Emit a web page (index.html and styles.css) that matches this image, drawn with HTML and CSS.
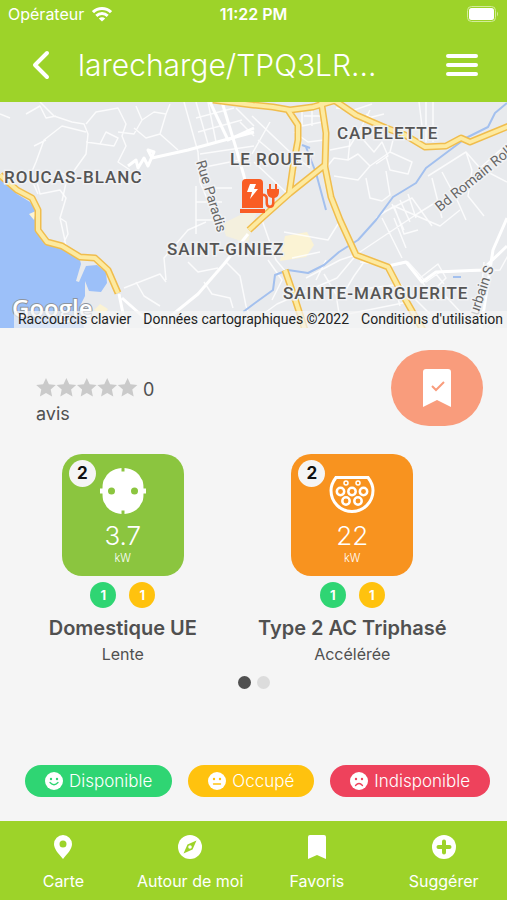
FILE: index.html
```html
<!DOCTYPE html>
<html lang="fr">
<head>
    <meta charset="UTF-8">
    <meta name="viewport" content="width=device-width, initial-scale=1.0">
    <title>larecharge</title>
    <link rel="stylesheet" href="styles.css">
</head>
<body>
    <header class="header">
        <div class="status-bar">
            <div class="status-left">
                <span>Opérateur</span>
                <svg width="20" height="15" viewBox="0 0 20 15" fill="none" stroke="#fff" stroke-width="3">
                    <path d="M1 5.2C6 .4 14 .4 19 5.2M4.3 8.8c3.3-3 8.1-3 11.4 0"/>
                    <path d="M10 14.5L6.8 11.4c1.8-1.7 4.6-1.7 6.4 0z" fill="#fff" stroke="none"/>
                </svg>
            </div>
            <span class="status-time">11:22 PM</span>
            <div class="status-right">
                <svg width="32" height="16" viewBox="0 0 32 16">
                    <rect x=".5" y=".5" width="28" height="15" rx="4" fill="none" stroke="#d3ec9b"/>
                    <rect x="2" y="2" width="25" height="12" rx="2.5" fill="#fff"/>
                    <path d="M30 5.500q2 2.500 0 5z" fill="#d3ec9b"/>
                </svg>
            </div>
        </div>
        <div class="nav-bar">
            <button class="icon-btn" aria-label="Retour">
                <svg width="18" height="30" viewBox="0 0 18 30" fill="none" stroke="#fff" stroke-width="4" stroke-linecap="round" stroke-linejoin="round">
                    <path d="M15 3L3 15l12 12"/>
                </svg>
            </button>
            <h1>larecharge/TPQ3LR...</h1>
            <button class="icon-btn" aria-label="Menu">
                <svg width="34" height="24" viewBox="0 0 34 24" stroke="#fff" stroke-width="4" stroke-linecap="round">
                    <path d="M3 3h28M3 12h28M3 21h28"/>
                </svg>
            </button>
        </div>
    </header>

    <section class="map">
        <svg class="map-canvas" viewBox="0 0 507 226" preserveAspectRatio="xMidYMid slice">
            <rect width="507" height="226" fill="#e8eaed"/>
            <!-- sea -->
            <path class="sea" d="M0 76L8 84 17 92 30 100 36 108 35 128 45 141 62 147 80 158 81 162 76 179 79 180 86 164 97 163 106 170 107 181 101 190 89 189 85 179 85 194 80 204 84 226H0z"/>
            <path class="sand" d="M36 109l-7 3 5 6zM94 208l6-6 8 5-5 7z"/>
            <path class="park" d="M285 134l22-4 7 13-8 12-26 4z"/>
            <path class="built" d="M222 122l24-12 12-2-6 14-6 32-8-16-12-4z"/>
            <!-- small streets -->
            <path class="street" d="M0 12l10 4M26 12l14-8 6 12 10-2M40 0l14 14 18 6 12 2 4 10-2 20-10 14-10 15-4 18M86 30l-24-6-18 14-8 22-6 14 8 18M46 38l-12 6M86 22l10-12 22-4 8 16-4 12 4 10-8 16 12 8M86 40l14 2 6-12 12 6-4 8-14-2M118 30l16 2 8-14 12-8 12 2M134 26l12 10 14-4 6-20 4-10M142 18l-6-14M160 32l18 16"/>
            <path class="street" d="M64 82l-4-12 10 6M36 76l4 16 20-4 6 8-6 20 4 18 2 10M64 140l4-8-2-12-6-4"/>
            <path class="road" d="M128 64l8-6 2 8 6-10 4 8 6-14-6-2 4 8 36-8 66-18"/>
            <path class="street" d="M184 0l14 50 2 30 20 48M196 0l12 42M208 0l8 40M196 16l38-10M198 30l44-12M200 52l54-8M200 66l40-8M196 100h26M202 86h30M196 118h24M240 20l14 14M236 6l18 18M196 84v48"/>
            <path class="road" d="M222 0l14 46 8 28 6 30M210 0l18 38 26-12"/>
            <path class="street" d="M252 14l40 38 18 14M258 38l38 32M254 60l36 34M270 20l-18 32M302 6v18l20-4M304 14h18M312 4v20M294 30l14 10 16-2M330 48l20-4 12-20 8-16M366 12l22 16M426 0v40M433 0v40M422 24l-3-24M336 6l18 2 18-6M360 18l24-6"/>
            <path class="street" d="M326 66l8-10 14 2 10-6 12 12-12 14-24-4M348 58l2-20 10-4 14 16 8-10 6 14-12 8M370 64l20-14 4-16M390 50l22 10-4 12-18-4-4-14M366 76l4 20 12 3 8-6-4-24"/>
            <path class="street" d="M428 74l38-24 14 16 27 14M432 76l10 40M442 70l16 30 8 18M466 50l6 18-4 26 16 20M480 66l27-24M384 110l28-14 20 28M392 102l12 26M400 98l10 22M408 92l8 24M376 116l18-12 46 20 20-16M394 104l10 28 14-4"/>
            <path class="road" d="M122 196l34 30M119 192l7 34M156 226l42-34 26-30 24-30"/>
            <path class="street" d="M124 186l36-14 6 8M166 178l-2-22 24-28 18-8M136 180l8 14 16 10M188 160l10 10 20-4M204 180l8 12 18 4 3 10M226 160l14 14 6 30 8 22"/>
            <path class="street" d="M262 118l14 40 10 12M284 130l44 8 10-16M292 156l28-6M255 218l22-16 60-26 20-24 60-40 16-10M306 176l34-18 18-6 6 8-10 14-12 20M324 172l12 20 4 26M326 158l-10 20M268 158l14 20-10 20M360 160l30 4 18-4 18 20 14-10 60-2 22-40M382 116l20 40M394 116l12 30M390 166l10 38M420 176l18-14 8 14-16 16zM436 172l8 10M438 186l28 30M484 160l-6 66M356 188l44-6 30 30M338 214l70-14"/>
            <path class="road" d="M388 164l18-4 16 20 14-10 46-2 25-24M507 116l-14 32-12 78"/>
            <!-- water -->
            <path class="river" d="M507 1l-12 10-7 14-22 11-40 30-10 15-23 14-17 23-18 20-19 12-15 13-16 8-20-3-13 5-2 15-18 13-12 9M306 45l10 26 10 37M302 43l8 3M453 175h8"/>
            <!-- main roads -->
            <defs>
                <path id="main-roads" d="M0 73L8 80 17 88 32 96 38 108 38 128 47 140 62 144 80 155 95 156 108 168 118 191M213-2L253 3 273 5 290 8 313 5 340-3M288 8L298 23 298 38 293 65 289 93M321-2L326 31 325 65 331 95 340 118 356 153 388 165 400 188 416 216 423 228M325 63L290 91 263 115 249 128M334-2L356 13 386 26 405 33 425 45 446 44 461 36 470 40 509 24M285 168L296 200 305 228"/>
            </defs>
            <use class="main-edge" href="#main-roads"/>
            <use class="main-road" href="#main-roads"/>
            <g class="district">
                <text x="4" y="81">ROUCAS-BLANC</text>
                <text x="230" y="63">LE ROUET</text>
                <text x="337" y="37">CAPELETTE</text>
                <text x="167" y="153">SAINT-GINIEZ</text>
                <text x="283" y="197">SAINTE-MARGUERITE</text>
            </g>
            <g class="street-name">
                <text transform="translate(196 60) rotate(73)">Rue Paradis</text>
                <text transform="translate(440 110) rotate(-39)">Bd Romain Rolland</text>
                <text transform="translate(478 214) rotate(-72)">urbain S</text>
            </g>
            <text class="google" x="12" y="215">Google</text>
            <!-- charging station marker -->
            <g fill="#f95d24">
                <path d="M242 81a4 4 0 0 1 4-4h13a4 4 0 0 1 4 4v25h-21zM240 107h25v4h-25z"/>
                <path d="M269 87v-5h2v5h4v-5h2v5h2v3q0 5-4.500 6v5q0 5-4.500 5t-4.500-5v-4q0-3-3-3v-2.500q5.500 0 5.500 5.500v4q0 2.500 2 2.500t2-2.500v-5q-5-1-5-6v-3z"/>
                <path d="M250 82h6l-2 5h4l-8 10 2-7h-5z" fill="#fff"/>
            </g>
        </svg>
        <div class="map-credits">
            <a href="#">Raccourcis clavier</a>
            <span>Données cartographiques ©2022</span>
            <a href="#">Conditions d'utilisation</a>
        </div>
    </section>

    <main>
        <div class="summary">
            <div class="rating">
                <svg width="102" height="20" viewBox="0 0 102 20" fill="#cacaca" role="img" aria-label="0 sur 5">
                    <defs>
                        <path id="star" d="M10 0l2.900 6.200 6.900.8-5.100 4.600 1.400 6.800L10 15l-6.100 3.400 1.400-6.800L.2 7l6.900-.8z"/>
                    </defs>
                    <use href="#star"/>
                    <use href="#star" x="20.400"/>
                    <use href="#star" x="40.800"/>
                    <use href="#star" x="61.200"/>
                    <use href="#star" x="81.600"/>
                </svg>
                0 avis
            </div>
            <button class="favorite-btn" aria-label="Ajouter aux favoris">
                <svg width="30" height="40" viewBox="0 0 30 40">
                    <path d="M1 4q0-3 3-3h22q3 0 3 3v35l-14-7-14 7z" fill="#fff"/>
                    <path d="M10 18l4 4 8-8" fill="none" stroke="#f99c7c" stroke-width="2"/>
                </svg>
            </button>
        </div>

        <div class="connectors">
            <article class="connector">
                <div class="plug plug-green">
                    <span class="plug-count">2</span>
                    <svg width="46" height="46" viewBox="0 0 46 46">
                        <path fill="#fff" d="M21.500 0v3.500h3V0Q31 .5 36 4q4 3 5.500 7 2 2 2 9.500H46v5h-2.500q0 7.500-2 9.500-1.500 4-5.500 7-5 3.500-11.500 4v-3.500h-3V46Q15 45.500 10 42q-4-3-5.500-7-2-2-2-9.500H0v-5h2.500q0-7.500 2-9.500Q6 7 10 4 15 .5 21.500 0z"/>
                        <circle cx="11.500" cy="23" r="3.500" fill="#8bc53f"/>
                        <circle cx="34.500" cy="23" r="3.500" fill="#8bc53f"/>
                    </svg>
                    <span class="power">3.7</span>
                    <span class="unit">kW</span>
                </div>
                <div class="counts">
                    <span class="count available">1</span>
                    <span class="count busy">1</span>
                </div>
                <h2>Domestique UE</h2>
                <p>Lente</p>
            </article>
            <article class="connector">
                <div class="plug plug-orange">
                    <span class="plug-count">2</span>
                    <svg width="46" height="46" viewBox="0 0 46 46" fill="none" stroke="#fff" stroke-width="2.500">
                        <path stroke-width="3" d="M7 9.500h32c3 4 5 8 5 13a21 21 0 0 1-42 0c0-5 2-9 5-13z"/>
                        <circle cx="17" cy="15" r="2" stroke-width="1.500"/>
                        <circle cx="29" cy="15" r="2" stroke-width="1.500"/>
                        <circle cx="11.500" cy="23.500" r="3.700"/>
                        <circle cx="23" cy="23.500" r="3.700"/>
                        <circle cx="34.500" cy="23.500" r="3.700"/>
                        <circle cx="17" cy="33" r="3.700"/>
                        <circle cx="29" cy="33" r="3.700"/>
                    </svg>
                    <span class="power">22</span>
                    <span class="unit">kW</span>
                </div>
                <div class="counts">
                    <span class="count available">1</span>
                    <span class="count busy">1</span>
                </div>
                <h2>Type 2 AC Triphasé</h2>
                <p>Accélérée</p>
            </article>
        </div>

        <div class="dots">
            <button class="dot active" aria-label="Page 1"></button>
            <button class="dot" aria-label="Page 2"></button>
        </div>

        <div class="legend">
            <span class="pill available">
                <svg width="18" height="18" viewBox="0 0 18 18">
                    <circle cx="9" cy="9" r="9" fill="#fff"/>
                    <path d="M5 10.500q4 4.500 8 0" fill="none" stroke="#2fd573" stroke-width="1.300" stroke-linecap="round"/>
                    <circle cx="6" cy="7" r="1.200" fill="#2fd573"/>
                    <circle cx="12" cy="7" r="1.200" fill="#2fd573"/>
                </svg>
                Disponible
            </span>
            <span class="pill busy">
                <svg width="18" height="18" viewBox="0 0 18 18">
                    <circle cx="9" cy="9" r="9" fill="#fff"/>
                    <path d="M5.500 12h7" fill="none" stroke="#ffc20e" stroke-width="1.300" stroke-linecap="round"/>
                    <circle cx="6" cy="7" r="1.200" fill="#ffc20e"/>
                    <circle cx="12" cy="7" r="1.200" fill="#ffc20e"/>
                </svg>
                Occupé
            </span>
            <span class="pill unavailable">
                <svg width="18" height="18" viewBox="0 0 18 18">
                    <circle cx="9" cy="9" r="9" fill="#fff"/>
                    <path d="M5.500 13.500q3.500-4 7 0" fill="none" stroke="#ee425c" stroke-width="1.300" stroke-linecap="round"/>
                    <circle cx="6" cy="7" r="1.200" fill="#ee425c"/>
                    <circle cx="12" cy="7" r="1.200" fill="#ee425c"/>
                </svg>
                Indisponible
            </span>
        </div>
    </main>

    <nav class="tab-bar">
        <a href="#">
            <svg width="24" height="24" viewBox="0 0 24 24" fill="#fff">
                <path fill-rule="evenodd" d="M12 0a9 9 0 0 0-9 9c0 5 4 9 9 15 5-6 9-10 9-15a9 9 0 0 0-9-9zm0 5.500a3.500 3.500 0 1 1 0 7 3.500 3.500 0 0 1 0-7z"/>
            </svg>
            Carte
        </a>
        <a href="#">
            <svg width="24" height="24" viewBox="0 0 24 24">
                <circle cx="12" cy="12" r="12" fill="#fff"/>
                <path d="M18.500 5.500l-4 9-9 4 4-9z" fill="#9dd329"/>
                <circle cx="12" cy="12" r="1.800" fill="#fff"/>
            </svg>
            Autour de moi
        </a>
        <a href="#">
            <svg width="24" height="24" viewBox="0 0 24 24" fill="#fff">
                <path d="M3 2q0-2 2-2h14q2 0 2 2v22l-9-4-9 4z"/>
            </svg>
            Favoris
        </a>
        <a href="#">
            <svg width="24" height="24" viewBox="0 0 24 24">
                <circle cx="12" cy="12" r="12" fill="#fff"/>
                <path d="M12 6.500v11M6.500 12h11" stroke="#9dd329" stroke-width="4" stroke-linecap="round"/>
            </svg>
            Suggérer
        </a>
    </nav>
</body>
</html>
```
FILE: styles.css
```css
* {
    box-sizing: border-box;
}
body {
    font-family: Inter, "Liberation Sans", sans-serif;
    background-color: #f5f5f5;
    color: #505050;
    margin: 0;
    min-height: 100vh;
    display: flex;
    flex-direction: column;
}
button {
    border: none;
    padding: 0;
    cursor: pointer;
}
svg {
    flex-shrink: 0;
}
h1, h2, p {
    margin: 0;
}
.header {
    background-color: #9dd329;
    color: #fff;
}
.status-bar {
    display: grid;
    grid-template-columns: 1fr auto 1fr;
    align-items: center;
    height: 28px;
    padding: 0 8px;
    font-size: 16px;
}
.status-left {
    display: flex;
    align-items: center;
    gap: 8px;
}
.status-time {
    font-weight: 600;
}
.status-right {
    display: flex;
    justify-content: flex-end;
}
.nav-bar {
    display: flex;
    align-items: center;
    height: 74px;
    padding: 0 28px 0 32px;
}
.nav-bar h1 {
    flex: 1;
    margin-left: 28px;
    font-size: 30px;
    font-weight: 300;
    line-height: 36px;
    white-space: nowrap;
}
.icon-btn {
    display: flex;
    background: none;
}

/* map */
.map {
    position: relative;
    height: 226px;
    overflow: hidden;
}
.map-canvas {
    display: block;
    width: 100%;
    height: 100%;
}
.sea {
    fill: #9cc0f9;
}
.sand, .park, .built {
    fill: #fbf3d4;
}
.built {
    opacity: 0.6;
}
.street, .road, .river, .main-edge, .main-road {
    fill: none;
    stroke: #fff;
    stroke-linejoin: round;
}
.street {
    stroke-width: 1.5;
    opacity: 0.8;
}
.road {
    stroke-width: 3;
}
.river {
    stroke: #a3c0ee;
    stroke-width: 2;
}
.main-edge {
    stroke: #f0bd4d;
    stroke-width: 7;
}
.main-road {
    stroke: #fdeaa0;
    stroke-width: 4;
}
.map text {
    font-family: Roboto, sans-serif;
    paint-order: stroke;
    stroke: #f1f2f4;
    stroke-width: 3;
}
.district {
    font-size: 17px;
    font-weight: 500;
    letter-spacing: 1px;
    fill: #555;
}
.street-name {
    font-size: 14px;
    fill: #666;
}
.map .google {
    font-family: "Open Sans", sans-serif;
    font-size: 24px;
    font-weight: 600;
    fill: #fff;
    stroke: #8e959e;
    stroke-width: 2;
}
.map-credits {
    position: absolute;
    right: 0;
    bottom: 0;
    display: flex;
    gap: 12px;
    padding: 0 4px;
    background-color: rgba(245, 245, 245, 0.7);
    color: #222;
    font-family: Roboto, sans-serif;
    font-size: 14px;
    line-height: 17px;
    white-space: nowrap;
}
.map-credits a {
    color: inherit;
    text-decoration: none;
}

main {
    flex: 1;
    display: flex;
    flex-direction: column;
}
.summary {
    display: flex;
    justify-content: space-between;
    padding: 22px 24px 0 36px;
}
.rating {
    width: 128px;
    padding-top: 28px;
    font-size: 18px;
    line-height: 24px;
}
.rating svg {
    vertical-align: -2px;
}
.favorite-btn {
    display: flex;
    align-items: center;
    justify-content: center;
    width: 92px;
    height: 76px;
    border-radius: 38px;
    background-color: #f99c7c;
}

/* connectors */
.connectors {
    display: flex;
    margin-top: 28px;
    padding-left: 8px;
    overflow: hidden;
}
.connector {
    flex: 0 0 46%;
    display: flex;
    flex-direction: column;
    align-items: center;
}
.plug {
    position: relative;
    display: flex;
    flex-direction: column;
    align-items: center;
    width: 122px;
    height: 122px;
    padding-top: 14px;
    border-radius: 20px;
    color: #fff;
}
.plug-green {
    background-color: #8bc53f;
}
.plug-orange {
    background-color: #f8931f;
}
.plug-count {
    position: absolute;
    top: 6px;
    left: 7px;
    width: 27px;
    height: 27px;
    border-radius: 50%;
    background-color: #f5f5f5;
    color: #111;
    font-size: 17px;
    font-weight: 700;
    line-height: 27px;
    text-align: center;
}
.power {
    margin-top: 6px;
    font-size: 26px;
    font-weight: 300;
    line-height: 32px;
}
.unit {
    font-size: 11px;
    font-weight: 300;
    line-height: 12px;
}
.counts {
    display: flex;
    gap: 13px;
    margin-top: 6px;
}
.count {
    width: 26px;
    height: 26px;
    border-radius: 50%;
    color: #fff;
    font-size: 13px;
    font-weight: 700;
    line-height: 26px;
    text-align: center;
}
.connector h2 {
    margin-top: 8px;
    font-size: 20px;
    font-weight: 600;
    line-height: 24px;
    white-space: nowrap;
}
.connector p {
    margin-top: 4px;
    font-size: 16px;
    line-height: 20px;
}
.available {
    background-color: #2fd573;
}
.busy {
    background-color: #ffc20e;
}
.unavailable {
    background-color: #ee425c;
}
.dots {
    display: flex;
    justify-content: center;
    gap: 6px;
    margin-top: 12px;
}
.dot {
    width: 13px;
    height: 13px;
    border-radius: 50%;
    background-color: #dcdcdc;
}
.dot.active {
    background-color: #505050;
}

/* status legend */
.legend {
    display: flex;
    justify-content: center;
    gap: 16px;
    margin-top: auto;
    padding: 24px 8px 24px 16px;
}
.pill {
    display: flex;
    align-items: center;
    gap: 6px;
    height: 32px;
    padding: 0 20px;
    border-radius: 16px;
    color: #fff;
    font-size: 17px;
    font-weight: 300;
}

.tab-bar {
    display: grid;
    grid-template-columns: repeat(4, 1fr);
    height: 79px;
    background-color: #9dd329;
}
.tab-bar a {
    display: flex;
    flex-direction: column;
    align-items: center;
    gap: 12px;
    padding-top: 14px;
    color: #fff;
    font-size: 16px;
    line-height: 20px;
    text-decoration: none;
    white-space: nowrap;
}
```
